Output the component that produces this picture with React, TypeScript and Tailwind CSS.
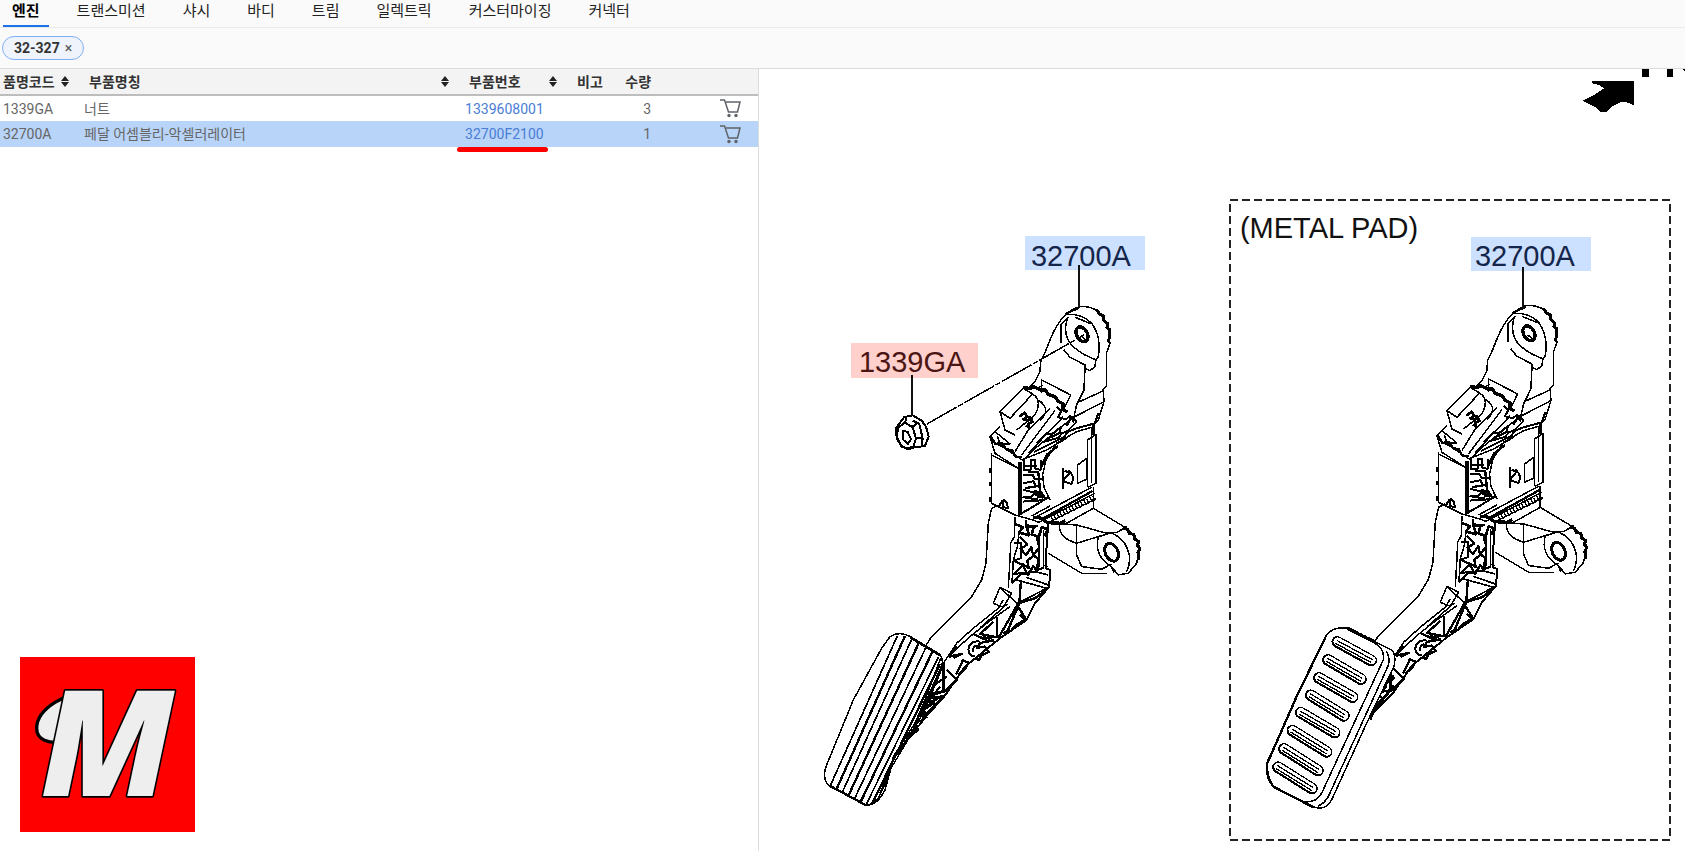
import React, { useState } from 'react';
import clsx from 'clsx';

const tabs = ['엔진', '트랜스미션', '샤시', '바디', '트림', '일렉트릭', '커스터마이징', '커넥터'];

const parts = [
  { code: '1339GA', name: '너트', number: '1339608001', qty: 3 },
  { code: '32700A', name: '페달 어셈블리-악셀러레이터', number: '32700F2100', qty: 1 },
];

const SortIcon = () => (
  <svg viewBox="0 0 8 11" className="w-2 h-[11px] shrink-0 fill-[#222]" aria-hidden="true">
    <path d="M4 0L8 5H0zM4 11L0 6h8z" />
  </svg>
);

const CartIcon = () => (
  <svg viewBox="0 0 21 19" className="w-[21px] h-[19px]" fill="none" stroke="#5f6368" strokeWidth="1.5" aria-hidden="true">
    <path d="M0 1H4.5L8.5 13H17.5L20 3H6" />
    <g fill="#5f6368" stroke="none">
      <circle cx="9" cy="16.5" r="1.7" />
      <circle cx="16" cy="16.5" r="1.7" />
    </g>
  </svg>
);

const Logo = () => (
  <svg viewBox="60 51 525 525" className="w-[175px] h-[175px] overflow-visible bg-[#ff0000]">
    <g fill="#eee" stroke="#000" strokeWidth="10" strokeLinejoin="round">
      <path d="M280 153C200 155 110 205 110 265C110 300 145 312 190 306L250 193Z" />
      <text
        x="122"
        y="468"
        fontFamily="Open Sans, sans-serif"
        fontWeight="800"
        fontStyle="italic"
        fontSize="440"
        paintOrder="stroke"
      >
        M
      </text>
    </g>
  </svg>
);

// bracket, sensor housing and lever shared by both pedals
const PedalArm = () => (
  <g fill="none" stroke="#000" strokeWidth="4.5" strokeLinejoin="round">
    {/* upper lug */}
    <g transform="translate(960 220) scale(.3333)">
      <path d="M358 265L320 280Q290 310 270 360L254 400L242 425L240 455L225 485L205 505" />
      <path d="M320 280L345 265Q370 252 405 268L430 290L445 325L450 370L440 398V498L425 515L352 548" />
      <path d="M410 268l8 14 12 6 2 14 12 10-3 10 9 8-1 18-4 20" strokeWidth="9" />
      <path d="M318 283Q365 280 395 310Q425 350 415 410L408 420L405 440L390 452L375 445L372 510L350 555L340 600" />
      <path d="M345 292l30 12 20 8M322 295C305 350 330 380 375 405L408 420" />
      <path d="M303 370V315L326 292M312 390L330 412L375 435V450" />
      <ellipse cx="366" cy="343" rx="16" ry="24" strokeWidth="10" transform="rotate(-30 366 343)" />
      <path d="M362 348l14 10" />
      <path d="M245 520V480L332 525L310 570M230 505l18-8" />
      <path d="M430 512L432 545L345 590M432 545L415 600L405 612" />
    </g>
    {/* housing */}
    <g transform="translate(960 400) scale(.3333)">
      <path d="M120 35L190-35L218-18L150 55ZM120 35L135 90L165 105" />
      <path d="M190-38l20 4 10-6 22 10 14 0 10 14 20 6 8 14 16 8-2 16 14 8" strokeWidth="10" />
      <path d="M218-18C248 0 235 45 205 62L170 90M235 0C265 20 262 40 240 62" />
      <path d="M178 50l16-12 8 12-12 8 14 4 6-10 8 14-12 4 2 14-10-8" strokeWidth="8" />
      <path d="M270 25L205 90L165 155M285 32L185 165M310 50L205 160M330 60L220 150L192 178" />
      <path d="M230 130l30-30 14 4 30-24-6 20-30 14-18 12 44-12 12-14 20-8-14 20-30 14-60 30" strokeWidth="6" />
      <path d="M320 78L335 50L350 66L318 98L350 85L405 70L415 40M290 20l14 14-10 18 24 6 12-10 12 20" strokeWidth="6" />
      <path d="M120 80L90 110L105 160L175 205M90 120L130 142L190 182M105 95L150 132H120L112 108" />
      <path d="M92 108l14 24 20-4 12 20 18 2 10 20 20 2" strokeWidth="7" />
      <path d="M395 82L350 95L290 130L258 180L248 225L252 262L270 300M395 82V102L408 105V250L385 262M383 262V120L405 106M395 82V250" />
      <path d="M400 72v34" strokeWidth="9" />
      <path d="M380 175L352 196V250L380 238V175" />
      <path d="M310 205V268M310 240L328 220L315 212M325 212Q348 230 334 252L312 244" strokeWidth="6" />
      <path d="M95 160V310L165 345M95 165L175 205" />
      <path d="M90 205v14M90 245v14M90 290v16" strokeWidth="8" />
      <path d="M180 185V345" strokeWidth="12" />
      <path d="M118 318q12-28 22-10l4 16-14-2M130 300v26" strokeWidth="6" />
      {/* spring pack */}
      <path d="M192 180v30h20v-30h14v26l16 4v-30M188 225h30l6 12h24M190 250l30-6 8 14 16 4M190 270l36 8-14 14h-22l40 6 14-22 14 22M188 305l60-4 16-8-56 34-22 12" strokeWidth="6" />
      <path d="M205 215l30 2 6 60 10 16M190 198h40M195 265l46-8M250 190l14-28 30-24M242 205l20-44" strokeWidth="7" />
      <path d="M225 272l18 6 4 16-20-8z" fill="#000" />
      <path d="M190 178L260 150L320 115M230 350L395 262M215 348L270 318M165 345l50 14 22 8L405 280M265 368L408 296M272 374L320 370L400 325V262" />
      <path d="M250 355L398 273" strokeWidth="7" />
      <path d="M275 358L402 294" strokeWidth="16" strokeDasharray="4 6" />
      <path d="M220 352l22 2 20 14 40 2 14-8" strokeWidth="10" />
      {/* lower lug */}
      <path d="M400 325L500 385L525 410L540 445L530 490L505 520L475 525L450 495" />
      <path d="M300 372L350 375L440 400L470 398L500 380M298 375C298 408 320 420 350 430V375" />
      <path d="M350 430L415 410L445 402M350 430V465L365 500L425 508L455 492M265 460L365 520H440" />
      <path d="M415 410C405 450 420 480 455 500L462 520M460 402C500 420 522 470 500 515" />
      <path d="M490 385l14 4 4 12 14 2 2 14 12 8-4 12 8 8-6 12 2 22" strokeWidth="9" />
      <ellipse cx="455" cy="457" rx="19" ry="28" strokeWidth="9" transform="rotate(-25 455 457)" />
    </g>
    {/* lever */}
    <g transform="translate(920 500) scale(.3333)">
      <path d="M235 15L215 25L205 70L198 190L185 240L155 290L35 410L12 445" />
      <path d="M285 50L283 110L272 130L270 180L265 265M297 100L292 140L280 180L276 250" />
      <path d="M385 70L380 130L378 205L390 210L388 260L345 310L320 360L240 415L135 500L80 580L10 650" strokeWidth="6" />
      <path d="M370 90V195L385 200" />
      <path d="M285 72l24 10-12 16 30 8-8-30 22 4-6 24 22 6 8-28 18 6-10 20M318 60v22l36-4" strokeWidth="8" />
      <path d="M300 110l22 24-20 12 16 20 16-24 6 26-18 14 4 22-20-12 18 34 16-28 12 18 2-40-14-10 18-24-8-30" strokeWidth="7" />
      <path d="M282 130h22v44l-22 8 26 14-26 26 60-6 30-14M358 110v90" strokeWidth="6" />
      <path d="M276 250L300 225L345 215L385 225M290 240L380 265L290 312L320 360M318 232L385 255" strokeWidth="5" />
      <path d="M303 240L298 310L260 400M290 312L345 295L380 268M320 360l-30-46" strokeWidth="7" />
      <path d="M240 262L220 310L250 322L275 280ZM240 262L298 318" />
      <path d="M250 300L235 325L160 385L110 430L70 490M270 320L200 370L150 410L95 460M262 312L180 384" />
      <path d="M232 350V412L180 402L220 366M235 415L290 318M160 402l30 14 40-6M210 420l-30 10-10 14 24-4 12 16-22 10-6 14-14-4" strokeWidth="7" />
      <path d="M180 425Q150 420 145 448Q146 468 165 470M172 436q-16 4-12 20" strokeWidth="6" />
      <path d="M190 405l10 20 22-4M250 400l20-10M300 345l16 14-26 16-14 14" strokeWidth="8" />
      <path d="M110 440L88 470L125 462L100 474M125 480l20 8-10 20-20 16M128 484L108 524M80 510L110 540L75 575" strokeWidth="7" />
      <path d="M72 485V580" strokeWidth="9" />
      <path d="M60 560L20 610M84 570L20 585L50 598L18 620M80 530L20 570" strokeWidth="6" />
    </g>
  </g>
);

const ribs = [
  [262, 138, 62, 585],
  [285, 138, 80, 597],
  [305, 148, 97, 607],
  [326, 160, 115, 618],
  [348, 172, 133, 628],
  [368, 184, 151, 638],
  [386, 200, 168, 645],
  [390, 222, 186, 642],
];

const slots = [
  [262, 126, 364, 182],
  [234, 180, 333, 238],
  [207, 234, 308, 292],
  [182, 286, 282, 348],
  [152, 338, 254, 398],
  [127, 392, 230, 456],
  [102, 447, 204, 512],
  [84, 502, 186, 566],
];

const RubberPad = () => (
  <g transform="translate(810 590) scale(.3333)" fill="none" stroke="#000" strokeWidth="4.5">
    <path
      d="M240 140Q270 120 310 145L385 190Q405 205 392 245L340 370L250 510L225 600Q200 650 165 645L60 590Q35 570 48 530L130 330L215 175Z"
      fill="#fff"
    />
    {ribs.map(([x1, y1, x2, y2], i) => (
      <path key={x1} d={`M${x1} ${y1}L${x2} ${y2}`} strokeWidth={i % 2 ? 7 : 5} />
    ))}
    <path d="M60 588L170 647M300 142L390 196" strokeWidth="7" />
    <path d="M392 205L345 330L315 400L250 500L232 570L205 625L180 642M400 215L360 310L330 380" />
    <path d="M385 250L300 440L240 540L210 610" />
    <path d="M402 215V305L350 322L372 340L342 360L350 382L318 400L324 420L290 450L270 480L262 495" strokeWidth="6" />
    <path d="M410 312L340 390L285 460M350 325L400 318L340 345M345 350L335 400L300 430" strokeWidth="5" />
  </g>
);

const MetalPad = () => (
  <g transform="translate(1250 600) scale(.3333)" fill="none" stroke="#000" strokeWidth="4.5" strokeLinecap="round">
    <path d="M430 235L385 265L375 320L362 355M430 260L372 330" strokeWidth="9" />
    <path
      d="M230 105Q250 78 300 85L375 125L425 150Q440 165 432 200L350 370L245 600Q225 635 190 620L75 565Q45 540 50 490L140 290Z"
      fill="#fff"
    />
    <path d="M225 115L140 290L52 490Q48 530 70 560L190 622" strokeWidth="7" />
    <path d="M292 88L375 130Q405 145 400 180L215 580Q200 608 165 606M410 155Q425 180 410 208L235 590Q222 612 205 618M300 92L370 120" />
    <path d="M300 88L375 126" strokeWidth="9" strokeDasharray="4 8" />
    {slots.map(([x1, y1, x2, y2]) => (
      <g key={y1}>
        <path d={`M${x1} ${y1}L${x2} ${y2}`} strokeWidth="35" />
        <path d={`M${x1 + 1} ${y1 - 1}L${x2 + 1} ${y2 - 1}`} strokeWidth="25" stroke="#fff" />
        <path d={`M${x1} ${y1 - 4}L${x2 + 2} ${y2 - 4}M${x1 - 4} ${y1 + 5}L${x2 - 2} ${y2 + 5}`} strokeWidth="4" />
      </g>
    ))}
  </g>
);

const Nut = () => (
  <g transform="translate(840 330) scale(.3333)" fill="#fff" stroke="#000" strokeWidth="6" strokeLinejoin="round">
    <path d="M168 295L192 262L218 256L245 272L258 290L266 320L255 348L225 352L205 358L185 350L170 325Z" />
    <path d="M175 292L195 278L218 292L228 325L220 350L200 356L182 345L170 318Z" />
    <path d="M188 302L203 306L213 328L204 342L188 328Z" />
    <path d="M195 278L200 262M218 272L238 282L248 325H228M218 290L232 280M248 325L245 350" fill="none" />
  </g>
);

const Diagram = () => (
  <svg viewBox="759 69 926 782" className="block w-full" shapeRendering="crispEdges" role="img" aria-label="32-327">
    {/* direction marker */}
    <path
      transform="translate(1560 60) scale(.3333)"
      d="M95 63H223V137L205 128L187 125L160 137L140 155H122L108 142L68 122L90 112L118 95L132 85L120 76L98 70ZM246 24h20v27h-20zM320 24h20v27h-20zM366 24h9v10z"
    />

    <rect x="1230" y="200" width="440" height="640" fill="none" stroke="#222" strokeWidth="2" strokeDasharray="8 4" />

    <PedalArm />
    <RubberPad />
    <g transform="translate(447 -1)">
      <PedalArm />
    </g>
    <MetalPad />

    <path d="M927 424L1084 335" stroke="#000" strokeWidth="1.5" strokeDasharray="34 2 5 2" />
    <Nut />

    <rect x="1025" y="236" width="120" height="34" fill="#cce0ff" />
    <rect x="1471" y="237" width="120" height="34" fill="#cce0ff" />
    <rect x="851" y="343" width="127" height="35" fill="#ffd0cc" />
    <path d="M1079 265V307M1523 267V309M912 375V416" stroke="#111" strokeWidth="2" />

    <g fontFamily="Liberation Sans, Arial, sans-serif" fontSize="29">
      <text x="1031" y="266" fill="#14254a">32700A</text>
      <text x="1475" y="266" fill="#14254a">32700A</text>
      <text x="859" y="372" fill="#4a1512">1339GA</text>
      <text x="1240" y="238" fill="#111">(METAL PAD)</text>
    </g>
  </svg>
);

const App = () => {
  const [activeTab, setActiveTab] = useState('엔진');
  const [selected, setSelected] = useState('32700A');

  return (
    <div className="min-h-screen flex flex-col bg-white text-[#333] font-[Roboto,'Noto_Sans_CJK_KR',sans-serif]">
      {/* Category tabs */}
      <nav className="flex gap-[19px] h-7 pl-[3px] bg-[#fafafa] border-b border-[#ebebeb] text-[15px] leading-5">
        {tabs.map((tab) => (
          <button
            key={tab}
            onClick={() => setActiveTab(tab)}
            className={clsx(
              'px-[9px] pb-1 border-b-2 whitespace-nowrap',
              activeTab === tab ? 'border-[#1a73e8] font-bold text-black' : 'border-transparent text-[#222]'
            )}
          >
            {tab}
          </button>
        ))}
      </nav>

      {/* Open group */}
      <div className="flex items-center h-[41px] px-0.5 bg-[#fafafa] border-b border-[#dcdcdc]">
        <button className="flex items-center gap-[5px] h-6 px-[11px] rounded-full border border-[#7fb0f5] bg-[#eff3fb] text-sm leading-5 font-bold text-[#333]">
          32-327
          <span className="font-normal text-[#555]">×</span>
        </button>
      </div>

      <main className="flex-1 grid grid-cols-[45.05%_1fr]">
        <section className="flex flex-col justify-between border-r border-[#dcdcdc]">
          <table className="w-full table-fixed text-sm leading-5 text-[#666]">
            <colgroup>
              <col className="w-[77px]" />
              <col />
              <col className="w-[108px]" />
              <col className="w-[48px]" />
              <col className="w-[46px]" />
              <col className="w-[99px]" />
            </colgroup>
            <thead className="bg-[#f3f3f3] text-[#333] border-b-2 border-[#bdbdbd]">
              <tr className="h-[26px] whitespace-nowrap text-left">
                <th className="pl-[3px] pr-2">
                  <div className="flex items-center justify-between">품명코드<SortIcon /></div>
                </th>
                <th className="pl-3 pr-2">
                  <div className="flex items-center justify-between">부품명칭<SortIcon /></div>
                </th>
                <th className="pl-3 pr-2">
                  <div className="flex items-center justify-between">부품번호<SortIcon /></div>
                </th>
                <th className="pl-3">비고</th>
                <th className="pr-2 text-right">수량</th>
                <th />
              </tr>
            </thead>
            <tbody>
              {parts.map((part) => (
                <tr
                  key={part.code}
                  onClick={() => setSelected(part.code)}
                  className={clsx('h-[26px]', selected === part.code && 'bg-[#b8d4f8]')}
                >
                  <td className="pl-[3px]">{part.code}</td>
                  <td className="pl-[7px]">{part.name}</td>
                  <td className="pl-2">
                    <a href="#part" className="relative text-[#4a7dd6]">
                      {part.number}
                      {part.code === '32700A' && (
                        <span className="absolute -left-2 top-[21px] w-[91px] h-[5px] rounded-full bg-[#ff0000]" />
                      )}
                    </a>
                  </td>
                  <td />
                  <td className="pr-2 text-right">{part.qty}</td>
                  <td className="pr-[17px]">
                    <button aria-label={part.number} className="block ml-auto">
                      <CartIcon />
                    </button>
                  </td>
                </tr>
              ))}
            </tbody>
          </table>

          <div className="pl-5 pb-[19px]">
            <Logo />
          </div>
        </section>

        <section>
          <Diagram />
        </section>
      </main>
    </div>
  );
};

export default App;
